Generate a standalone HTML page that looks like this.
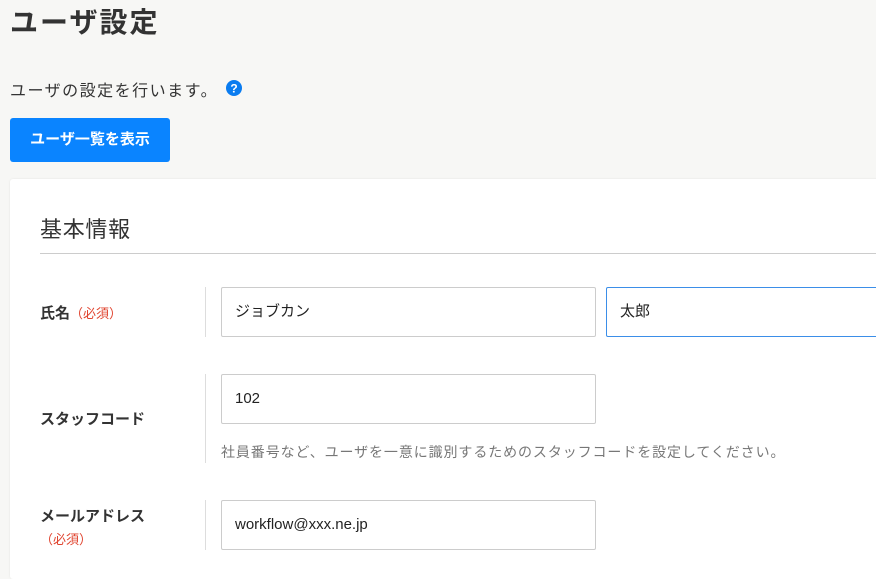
<!DOCTYPE html>
<html><head><meta charset="utf-8"><style>
body{margin:0;width:876px;height:561px;overflow:hidden;background:#f7f7f5;font-family:"Liberation Sans","Noto Sans CJK JP",sans-serif;color:#333;position:relative}
.a{position:absolute;white-space:nowrap}
h1{position:absolute;left:10px;top:1px;margin:0;font-size:28px;font-weight:bold;color:#333;letter-spacing:2px}
.btn{position:absolute;left:10px;top:118px;width:160px;height:44px;background:#0a84ff;border-radius:3px;color:#fff;font-size:15px;font-weight:bold;line-height:44px;text-align:center}
.card{position:absolute;left:10px;top:179px;width:900px;height:400px;background:#fff;border-radius:3px;box-shadow:0 0 2px rgba(0,0,0,.08)}
.inp{position:absolute;height:48px;border:1px solid #ccc;border-radius:2px;background:#fff;font-size:15px;line-height:48px;padding-left:13px;box-sizing:content-box;color:#222}
.lab{position:absolute;left:40px;font-size:15px;font-weight:bold;color:#333}
.req{color:#e0442f;font-size:13px;font-weight:normal}
.vl{position:absolute;left:205px;width:1px;background:#ddd}
</style></head><body>
<h1>ユーザ設定</h1>
<div class="a" style="left:10px;top:77px;font-size:16px;color:#333;letter-spacing:1.5px">ユーザの設定を行います。</div>
<svg class="a" style="left:226px;top:80px" width="16" height="16" viewBox="0 0 16 16"><circle cx="8" cy="8" r="8" fill="#0a7cf0"/><text x="8" y="12.5" text-anchor="middle" font-size="12" font-weight="bold" fill="#fff" font-family="Liberation Sans">?</text></svg>
<div class="btn">ユーザ一覧を表示</div>
<div class="card"></div>
<div class="a" style="left:40px;top:212px;font-size:22px;color:#333;letter-spacing:0.7px">基本情報</div>
<div class="a" style="left:40px;top:253px;width:840px;height:1px;background:#ccc"></div>
<div class="lab" style="top:302px">氏名<span class="req">（必須）</span></div>
<div class="vl" style="top:287px;height:50px"></div>
<div class="inp" style="left:221px;top:287px;width:360px">ジョブカン</div>
<div class="inp" style="left:606px;top:287px;width:300px;border-color:#3b8ee8">太郎</div>
<div class="lab" style="top:408px">スタッフコード</div>
<div class="vl" style="top:374px;height:89px"></div>
<div class="inp" style="left:221px;top:374px;width:360px">102</div>
<div class="a" style="left:221px;top:442px;font-size:14px;color:#777;letter-spacing:0.9px">社員番号など、ユーザを一意に識別するためのスタッフコードを設定してください。</div>
<div class="lab" style="top:505px">メールアドレス</div>
<div class="a req" style="left:40px;top:529px">（必須）</div>
<div class="vl" style="top:500px;height:50px"></div>
<div class="inp" style="left:221px;top:500px;width:360px">workflow@xxx.ne.jp</div>
</body></html>
